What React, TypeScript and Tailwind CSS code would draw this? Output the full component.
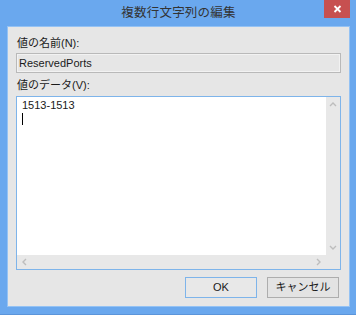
import React from 'react';

const font = { fontFamily: '"Liberation Sans", "Noto Sans CJK JP", sans-serif' };

function Chevron({ dir }: { dir: 'up' | 'down' | 'left' | 'right' }) {
  const paths: Record<string, string> = {
    up: 'M1 5 L4 2 L7 5',
    down: 'M1 2 L4 5 L7 2',
    left: 'M5 1 L2 4 L5 7',
    right: 'M2 1 L5 4 L2 7',
  };
  const w = dir === 'up' || dir === 'down' ? 8 : 7;
  const h = dir === 'up' || dir === 'down' ? 7 : 8;
  return (
    <svg width={w} height={h} viewBox={`0 0 ${w} ${h}`} fill="none">
      <path d={paths[dir]} stroke="#bdbdbd" strokeWidth="1.4" />
    </svg>
  );
}

export default function App() {
  return (
    <div
      className="relative w-[356px] h-[315px] bg-[#6aa8ee] flex flex-col pl-[7px] pr-[6px] pb-[7px] border-b border-[#5b95da] text-[#1a1a1a]"
      style={font}
    >
      {/* Title bar */}
      <div className="h-[26px] flex items-center justify-center shrink-0">
        <span className="text-[12.5px] text-[#333] tracking-[0.2px]">複数行文字列の編集</span>
      </div>
      <div className="absolute top-0 right-[6px] w-[26px] h-[18px] bg-[#c75050] flex items-center justify-center">
        <svg width="9" height="8" viewBox="0 0 9 8">
          <path d="M1.5 1 L7.5 7 M7.5 1 L1.5 7" stroke="#fff" strokeWidth="1.8" />
        </svg>
      </div>

      {/* Content */}
      <div className="flex-1 bg-[#e6e6e6] border border-[#94c2f4] border-b-[#94c2f4] flex flex-col px-[8px] pt-[9px]">
        <div className="pl-[1px] text-[11px] leading-[14px]">値の名前(N):</div>
        <div className="mt-[3px] h-[20px] border border-[#b9b9b9] shadow-[inset_0_0_0_1px_#f2f2f2] flex items-center pl-[2px] text-[11px]">
          ReservedPorts
        </div>
        <div className="mt-[5px] pl-[1px] text-[11px] leading-[14px]">値のデータ(V):</div>
        <div className="mt-[4px] h-[174px] border border-[#7eb4ea] bg-white grid grid-cols-[1fr_14px] grid-rows-[1fr_14px]">
          <div className="pl-[5px] pt-[2px] text-[11px] leading-[13px]">
            <div>1513-1513</div>
            <div className="w-px h-[12px] bg-black mt-[1px]" />
          </div>
          <div className="bg-[#e8e8e8] flex flex-col justify-between items-center py-[4px]">
            <Chevron dir="up" />
            <Chevron dir="down" />
          </div>
          <div className="bg-[#e8e8e8] flex justify-between items-center px-[4px]">
            <Chevron dir="left" />
            <Chevron dir="right" />
          </div>
          <div className="bg-[#e8e8e8]" />
        </div>
        <div className="mt-[7px] flex justify-end gap-[10px] pr-[2px]">
          <button className="w-[72px] h-[21px] border border-[#7eb4ea] bg-[#e8e8e8] text-[11px] flex items-center justify-center">
            OK
          </button>
          <button className="w-[72px] h-[21px] border border-[#adadad] bg-[#e3e3e3] text-[11px] flex items-center justify-center">
            キャンセル
          </button>
        </div>
      </div>
    </div>
  );
}
